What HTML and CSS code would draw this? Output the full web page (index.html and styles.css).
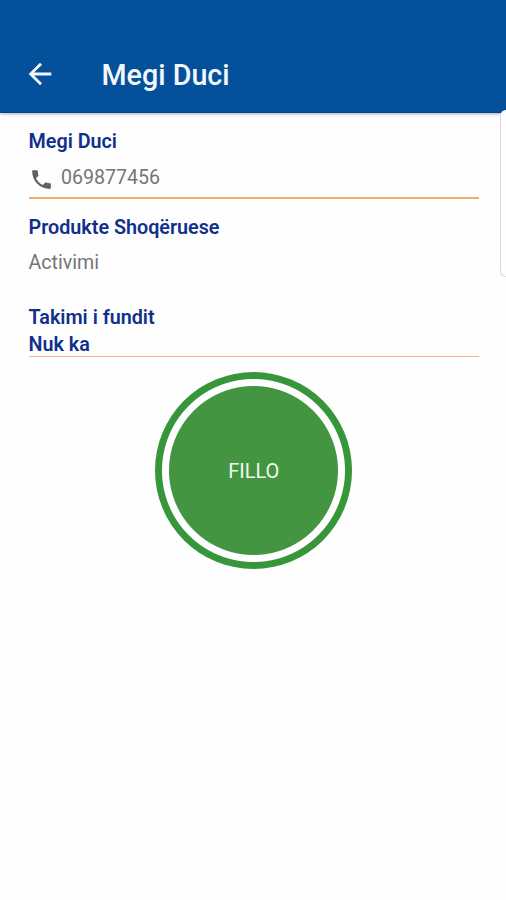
FILE: index.html
```html
<!DOCTYPE html>
<html lang="sq">
<head>
<meta charset="utf-8">
<title>Megi Duci</title>
<link rel="stylesheet" href="styles.css">
</head>
<body>
<header class="appbar">
  <svg class="back" viewBox="0 0 24 24"><path d="M20 11H7.83l5.59-5.59L12 4l-8 8 8 8 1.41-1.41L7.83 13H20v-2z"/></svg>
  <h1 class="title"><span>Megi Duci</span></h1>
</header>
<main class="content">
  <section class="contact">
    <h2 class="label"><span>Megi Duci</span></h2>
    <div class="phone">
      <svg class="phone-icon" viewBox="0 0 24 24"><path d="M6.62 10.79c1.44 2.83 3.76 5.14 6.59 6.59l2.2-2.2c.27-.27.67-.36 1.02-.24 1.12.37 2.33.57 3.57.57.55 0 1 .45 1 1V20c0 .55-.45 1-1 1-9.39 0-17-7.61-17-17 0-.55.45-1 1-1h3.5c.55 0 1 .45 1 1 0 1.25.2 2.45.57 3.57.11.35.03.74-.25 1.02l-2.2 2.2z"/></svg>
      <span class="value">069877456</span>
    </div>
  </section>
  <section class="details">
    <h2 class="label"><span>Produkte Shoqëruese</span></h2>
    <p class="value product"><span>Activimi</span></p>
    <h2 class="label"><span>Takimi i fundit</span></h2>
    <p class="label"><span>Nuk ka</span></p>
  </section>
  <button class="start"><span>FILLO</span></button>
</main>
<aside class="drawer"></aside>
</body>
</html>
```
FILE: styles.css
```css
* {
  box-sizing: border-box;
}

body {
  margin: 0;
  height: 900px;
  position: relative;
  overflow: hidden;
  background: #fefefe;
  font-family: Roboto, sans-serif;
}

h1, h2, p {
  margin: 0;
}

.appbar {
  height: 113px;
  padding: 35px 23px 0;
  display: flex;
  align-items: center;
  gap: 44.5px;
  background: #04509b;
  border-bottom: 1px solid #064489;
  box-shadow: 0 1px 3px rgba(0, 30, 70, 0.35);
}

.back {
  width: 34px;
  height: 34px;
  fill: #f4f7fc;
}

.title {
  padding-top: 2px;
  color: #f4f7fc;
  font-size: 28.7px;
  font-weight: 500;
  line-height: 32px;
}

.content {
  padding: 15px 27px 0 28.5px;
  display: flex;
  flex-direction: column;
}

.contact {
  height: 71px;
  border-bottom: 2px solid #f2ac6c;
}

.label {
  color: #10308c;
  font-size: 19.75px;
  font-weight: 600;
  line-height: 27px;
}

.phone {
  display: flex;
  align-items: flex-start;
  gap: 7.5px;
  padding-top: 9px;
}

.phone-icon {
  width: 25px;
  height: 25px;
  margin-top: 2.5px;
  fill: #626262;
}

.value {
  color: #757575;
  font-size: 19.6px;
  line-height: 27px;
}

.details {
  margin-top: 15px;
  height: 143px;
  border-bottom: 1px solid #f3b48c;
}

.product {
  margin: 8px 0 28px;
}

.start {
  align-self: center;
  width: 197px;
  height: 197px;
  margin-top: 15px;
  padding: 0;
  border: 0;
  border-radius: 50%;
  background: radial-gradient(circle, #439542 84px, #fff 85px, #fff 91px, #37953a 92px);
  color: #f1f8ee;
  font: 400 20px/24px Roboto, sans-serif;
}

.drawer {
  position: absolute;
  top: 110px;
  right: -12px;
  width: 18px;
  height: 167px;
  border: 1px solid #dadada;
  border-top-color: #fff;
  border-radius: 6px;
  background: #fefefe;
}
```
